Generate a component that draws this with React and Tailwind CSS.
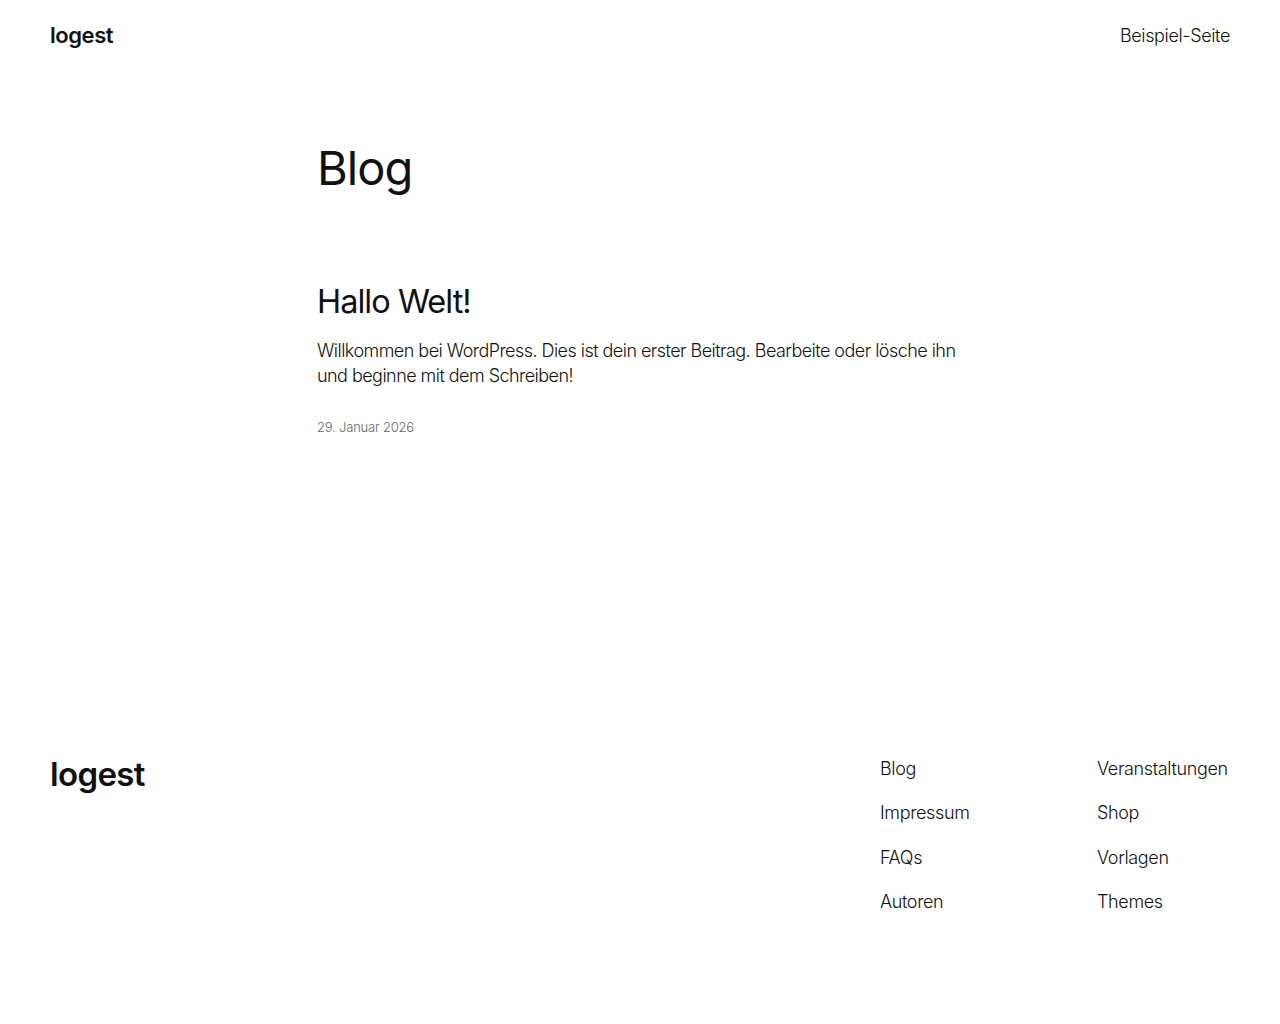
import React from 'react';

const footerLinks = [
  ['Blog', 'Veranstaltungen'],
  ['Impressum', 'Shop'],
  ['FAQs', 'Vorlagen'],
  ['Autoren', 'Themes'],
];

export default function App() {
  return (
    <div className="min-h-screen bg-white text-[#111111] font-['Inter','Liberation_Sans',sans-serif]">
      <header className="flex items-center justify-between px-[50px] h-[70px]">
        <a className="text-[22px] font-semibold tracking-[-0.02em]">logest</a>
        <nav className="text-[18px] font-light tracking-[-0.02em]">Beispiel-Seite</nav>
      </header>

      <main className="w-[646px] mx-auto pt-[70px]">
        <h1 className="text-[47px] leading-[1.2] font-normal tracking-[-0.02em]">Blog</h1>

        <article className="mt-[86px]">
          <h2 className="text-[32.5px] leading-[1.2] font-normal tracking-[-0.03em]">Hallo Welt!</h2>
          <p className="mt-[17px] text-[18px] leading-[25px] font-light tracking-[-0.03em]">
            Willkommen bei WordPress. Dies ist dein erster Beitrag. Bearbeite oder lösche ihn und beginne mit dem Schreiben!
          </p>
          <p className="mt-[30px] text-[13px] font-light text-[#666666] tracking-[-0.015em]">29. Januar 2026</p>
        </article>
      </main>

      <footer className="flex justify-between px-[50px] mt-[312px] pb-[100px]">
        <div className="text-[33px] font-semibold tracking-[-0.02em] leading-none pt-[8px]">logest</div>
        <div className="grid grid-cols-[217px_133px] gap-y-[19.5px] pt-[6px] text-[18px] font-light tracking-[-0.02em] leading-[25px]">
          {footerLinks.map(([a, b]) => (
            <React.Fragment key={a}>
              <a>{a}</a>
              <a>{b}</a>
            </React.Fragment>
          ))}
        </div>
      </footer>
    </div>
  );
}
